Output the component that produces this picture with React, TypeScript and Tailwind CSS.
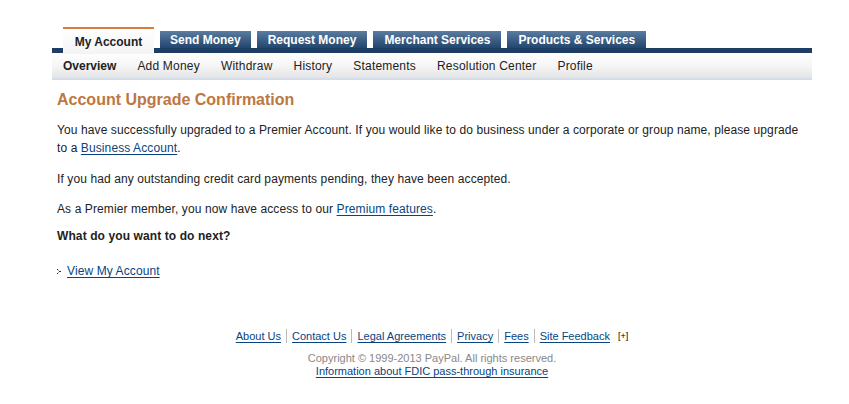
import React from 'react';

const tabs = ['Send Money', 'Request Money', 'Merchant Services', 'Products & Services'];
const subnav = ['Add Money', 'Withdraw', 'History', 'Statements', 'Resolution Center', 'Profile'];
const footerLinks = ['About Us', 'Contact Us', 'Legal Agreements', 'Privacy', 'Fees', 'Site Feedback'];

const linkCls = 'text-[#084482] underline underline-offset-2 decoration-[#084482]';

export default function App() {
  return (
    <div className="min-h-[404px] w-[849px] bg-white font-['Liberation_Sans',Arial,sans-serif] text-[12px] text-[#222]">
      <div className="ml-[52px] w-[760px] pt-[27px]">
        {/* main tabs */}
        <div className="flex items-end gap-[6px] border-b-[5px] border-[#1d3d64] pl-[11px]">
          <div className="relative z-10 -mb-[6px] flex h-[27px] w-[91px] items-center justify-center border-t-2 border-[#d97b3f] bg-gradient-to-b from-white to-[#f4f4f4] text-[12px] font-bold text-[#222]">
            My Account
          </div>
          {tabs.map((t, i) => (
            <div
              key={t}
              className={`flex h-[17px] items-end bg-gradient-to-b from-[#5a7ca0] to-[#23466f] pb-[1px] text-[12px] font-bold leading-[14px] text-white ${i === 0 ? 'px-[10px]' : 'px-[11px]'}`}
            >
              {t}
            </div>
          ))}
        </div>

        {/* sub navigation */}
        <div className="flex h-[27px] items-center gap-[21px] border-b-2 border-[#d3deea] bg-gradient-to-b from-white via-[#f6f6f6] to-[#e4e4e4] pl-[11px] text-[12px] tracking-[0.2px] text-[#222]">
          <span className="font-bold tracking-normal">Overview</span>
          {subnav.map((s) => (
            <span key={s}>{s}</span>
          ))}
        </div>

        {/* content */}
        <div className="pl-[5px] pr-[8px] tracking-[0.1px]">
          <h1 className="mt-[10px] text-[16px] font-bold leading-[20px] tracking-normal text-[#bd773f]">Account Upgrade Confirmation</h1>
          <p className="mt-[11px] leading-[18px]">
            You have successfully upgraded to a Premier Account. If you would like to do business under a corporate or group name, please upgrade to a{' '}
            <a className={linkCls}>Business Account</a>.
          </p>
          <p className="mt-[13px] leading-[18px]">If you had any outstanding credit card payments pending, they have been accepted.</p>
          <p className="mt-[12px] leading-[18px]">
            As a Premier member, you now have access to our <a className={linkCls}>Premium features</a>.
          </p>
          <p className="mt-[9px] font-bold leading-[18px]">What do you want to do next?</p>
          <div className="mt-[17px] flex items-center gap-[6px] leading-[18px]">
            <svg width="4" height="5" viewBox="0 0 4 5" className="mt-[1px]">
              <rect x="0" y="0" width="1" height="1" fill="#333" />
              <rect x="2" y="2" width="2" height="1" fill="#333" />
              <rect x="0" y="4" width="1" height="1" fill="#333" />
              <rect x="1" y="1" width="1" height="1" fill="#999" />
              <rect x="1" y="3" width="1" height="1" fill="#999" />
            </svg>
            <a className={linkCls}>View My Account</a>
          </div>
        </div>

        {/* footer */}
        <div className="mt-[49px] flex flex-col items-center text-[11px]">
          <div className="flex items-center leading-[14px]">
            {footerLinks.map((l, i) => (
              <span key={l} className={i === 0 ? 'pr-[5px]' : 'border-l border-[#bbb] px-[5px]'}>
                <a className={linkCls}>{l}</a>
              </span>
            ))}
            <span className="ml-[3px] text-[9px] text-black">[+]</span>
          </div>
          <div className="mt-[9px] leading-[13px] text-[#888]">Copyright © 1999-2013 PayPal. All rights reserved.</div>
          <a className={`${linkCls} leading-[13px]`}>Information about FDIC pass-through insurance</a>
        </div>
      </div>
    </div>
  );
}
